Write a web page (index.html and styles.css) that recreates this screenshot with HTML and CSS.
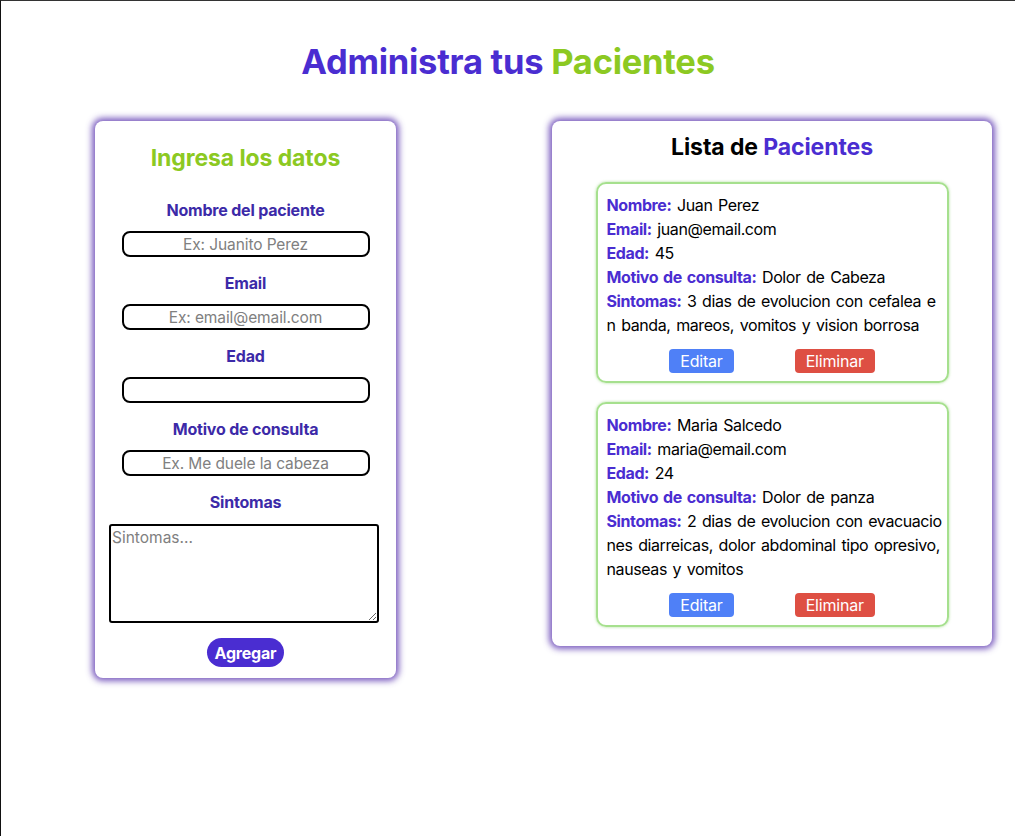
FILE: index.html
```html
<!DOCTYPE html>
<html lang="es">
<head>
<meta charset="utf-8">
<title>Administra tus Pacientes</title>
<link rel="stylesheet" href="styles.css">
</head>
<body>
<div class="page">
  <h1 class="title">Administra tus <span class="green">Pacientes</span></h1>
  <div class="columns">
    <form class="form-card">
      <h2 class="form-title">Ingresa los datos</h2>
      <label class="label" for="nombre">Nombre del paciente</label>
      <input class="input" id="nombre" type="text" placeholder="Ex: Juanito Perez">
      <label class="label" for="email">Email</label>
      <input class="input" id="email" type="email" placeholder="Ex: email@email.com">
      <label class="label" for="edad">Edad</label>
      <input class="input" id="edad" type="number">
      <label class="label" for="motivo">Motivo de consulta</label>
      <input class="input" id="motivo" type="text" placeholder="Ex. Me duele la cabeza">
      <label class="label" for="sintomas">Sintomas</label>
      <textarea class="textarea" id="sintomas" placeholder="Sintomas..."></textarea>
      <button class="btn-add" type="button">Agregar</button>
    </form>
    <section class="list-card">
      <h2 class="list-title">Lista de <span class="indigo">Pacientes</span></h2>
      <div class="patient">
        <p><b>Nombre:</b> Juan Perez</p>
        <p><b>Email:</b> juan@email.com</p>
        <p><b>Edad:</b> 45</p>
        <p><b>Motivo de consulta:</b> Dolor de Cabeza</p>
        <p><b>Sintomas:</b> 3 dias de evolucion con cefalea en banda, mareos, vomitos y vision borrosa</p>
        <div class="actions">
          <button class="btn-edit" type="button">Editar</button>
          <button class="btn-del" type="button">Eliminar</button>
        </div>
      </div>
      <div class="patient">
        <p><b>Nombre:</b> Maria Salcedo</p>
        <p><b>Email:</b> maria@email.com</p>
        <p><b>Edad:</b> 24</p>
        <p><b>Motivo de consulta:</b> Dolor de panza</p>
        <p><b>Sintomas:</b> 2 dias de evolucion con evacuaciones diarreicas, dolor abdominal tipo opresivo, nauseas y vomitos</p>
        <div class="actions">
          <button class="btn-edit" type="button">Editar</button>
          <button class="btn-del" type="button">Eliminar</button>
        </div>
      </div>
    </section>
  </div>
</div>
</body>
</html>
```
FILE: styles.css
```css
* { box-sizing: border-box; }
html, body { margin: 0; padding: 0; background: #fff; }
body {
  font-family: Inter, "Noto Sans", "Liberation Sans", sans-serif;
  color: #000;
}
.page {
  min-height: 836px;
  border-top: 1px solid #333;
  border-left: 1px solid #111;
  padding-top: 40px;
}
.title {
  margin: 0;
  text-align: center;
  font-size: 34.5px;
  font-weight: 700;
  line-height: 42px;
  color: #4a2dd1;
  letter-spacing: -0.25px;
}
.green { color: #8cc922; }
.indigo { color: #4a2dd1; }
.columns {
  display: flex;
  align-items: flex-start;
  margin-top: 38px;
  padding-left: 94px;
  gap: 156px;
}
.form-card {
  width: 301px;
  background: #fff;
  border-radius: 8px;
  box-shadow: 0 0 6px 3px rgba(100, 65, 180, 0.85);
  display: flex;
  flex-direction: column;
  align-items: center;
  padding: 23px 16px 11px;
}
.form-title {
  margin: 0 0 28px;
  font-size: 23px;
  line-height: 28px;
  font-weight: 700;
  color: #8cc922;
  letter-spacing: -0.1px;
}
.label {
  font-size: 16px;
  font-weight: 700;
  line-height: 20px;
  color: #3c2aa8;
  margin-bottom: 11px;
  letter-spacing: -0.2px;
}
.input {
  width: 248px;
  height: 26px;
  border: 2px solid #000;
  border-radius: 8px;
  text-align: center;
  font-family: inherit;
  font-size: 15.5px;
  padding: 0 6px;
  margin-bottom: 16px;
  background: #fff;
  letter-spacing: -0.1px;
}
.input::placeholder, .textarea::placeholder { color: #808080; }
.textarea {
  width: 270px;
  height: 99px;
  border: 2px solid #000;
  border-radius: 3px;
  font-family: inherit;
  font-size: 15.5px;
  padding: 2px 1px;
  margin: 1px 3px 15px 0;
  resize: vertical;
}
.btn-add {
  background: #4a2dd1;
  color: #fff;
  border: 0;
  border-radius: 15px;
  font-family: inherit;
  font-size: 16px;
  font-weight: 700;
  height: 29px;
  padding: 0 8px;
  letter-spacing: -0.2px;
}
.list-card {
  width: 440px;
  background: #fff;
  border-radius: 8px;
  box-shadow: 0 0 6px 3px rgba(100, 65, 180, 0.85);
  padding: 12px 0 19px;
  display: flex;
  flex-direction: column;
  align-items: center;
}
.list-title {
  margin: 0 0 21px;
  font-size: 23px;
  line-height: 28px;
  font-weight: 700;
  color: #000;
  letter-spacing: -0.1px;
}
.patient {
  width: 353px;
  border: 2px solid #a6e08e;
  border-radius: 10px;
  box-shadow: 0 0 3px rgba(140, 210, 110, 0.7);
  padding: 9px 4px 8px 9px;
  margin-bottom: 19px;
}
.patient:last-child { margin-bottom: 0; }
.patient p {
  margin: 0;
  font-size: 16px;
  line-height: 24px;
  letter-spacing: -0.4px;
  word-spacing: 1.5px;
  word-break: break-all;
}
.patient b { color: #4a2dd1; font-weight: 700; }
.actions {
  display: flex;
  justify-content: center;
  gap: 61px;
  margin-top: 12px;
  padding-right: 5px;
}
.btn-edit, .btn-del {
  border: 0;
  border-radius: 4px;
  color: #fff;
  font-family: inherit;
  font-size: 16px;
  height: 24px;
  padding: 0 11px;
  letter-spacing: -0.2px;
}
.btn-edit { background: #4f80f7; }
.btn-del { background: #de4f43; }
```
